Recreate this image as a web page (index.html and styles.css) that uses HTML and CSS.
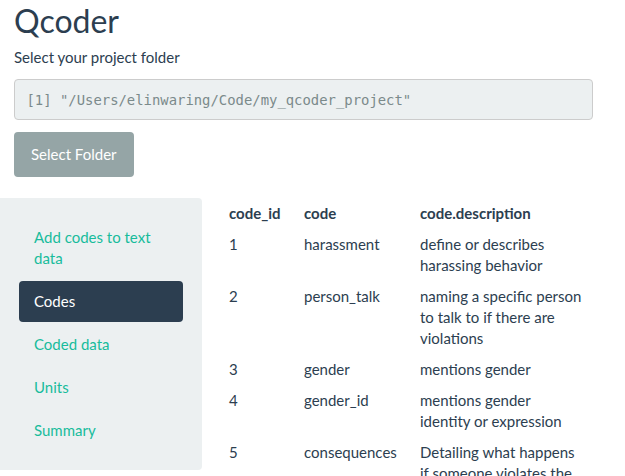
FILE: index.html
```html
<!DOCTYPE html>
<html>
<head>
<meta charset="utf-8">
<link rel="stylesheet" href="styles.css">
</head>
<body>
<div class="header">
  <h2 class="title">Qcoder</h2>
  <div class="label">Select your project folder</div>
  <pre class="path">[1] "/Users/elinwaring/Code/my_qcoder_project"</pre>
  <button class="btn">Select Folder</button>
</div>
<div class="layout">
  <div class="well">
    <ul class="pills">
      <li><a>Add codes to text data</a></li>
      <li class="active"><a>Codes</a></li>
      <li><a>Coded data</a></li>
      <li><a>Units</a></li>
      <li><a>Summary</a></li>
    </ul>
  </div>
  <div class="main">
    <table class="codes">
      <thead>
        <tr><th class="c1">code_id</th><th class="c2">code</th><th class="c3">code.description</th></tr>
      </thead>
      <tbody>
        <tr><td>1</td><td>harassment</td><td>define or describes harassing behavior</td></tr>
        <tr><td>2</td><td>person_talk</td><td>naming a specific person to talk to if there are violations</td></tr>
        <tr><td>3</td><td>gender</td><td>mentions gender</td></tr>
        <tr><td>4</td><td>gender_id</td><td>mentions gender identity or expression</td></tr>
        <tr><td>5</td><td>consequences</td><td>Detailing what happens if someone violates the code</td></tr>
      </tbody>
    </table>
  </div>
</div>
</body>
</html>
```

FILE: styles.css
```css
html, body {
  margin: 0;
  padding: 0;
  background: #ffffff;
  overflow: hidden;
}
body {
  font-family: Lato, "Open Sans", "Liberation Sans", sans-serif;
  font-size: 15px;
  line-height: 21px;
  color: #2c3e50;
  height: 476px;
}
.header {
  padding: 0 32px 0 14px;
}
.title {
  margin: 2px 0 0 0;
  font-size: 32px;
  line-height: 38px;
  font-weight: 400;
  color: #2c3e50;
}
.label {
  margin-top: 7px;
}
.path {
  margin: 11px 0 0 0;
  padding: 9.5px 11.5px;
  font-family: "DejaVu Sans Mono", "Liberation Mono", monospace;
  font-size: 13.9px;
  line-height: 20px;
  color: #7b8a8b;
  background: #ecf0f1;
  border: 1px solid #cccccc;
  border-radius: 4px;
}
.btn {
  display: block;
  margin-top: 12px;
  padding: 10px 15px;
  font-family: inherit;
  font-size: 15px;
  line-height: 21px;
  color: #ffffff;
  background: #95a5a6;
  border: 2px solid #95a5a6;
  border-radius: 4px;
}
.layout {
  display: flex;
  align-items: flex-start;
  margin-top: 21px;
}
.well {
  width: 202px;
  box-sizing: border-box;
  padding: 19px;
  background: #ecf0f1;
  border-radius: 0 4px 4px 0;
  flex: none;
}
.pills {
  list-style: none;
  margin: 0;
  padding: 0;
}
.pills li + li {
  margin-top: 2px;
}
.pills a {
  display: block;
  padding: 10px 15px;
  color: #18bc9c;
  border-radius: 4px;
}
.pills li.active a {
  background: #2c3e50;
  color: #ffffff;
}
.main {
  padding-left: 22px;
}
.codes {
  border-collapse: collapse;
}
.codes th, .codes td {
  padding: 5px;
  text-align: left;
  vertical-align: top;
}
.codes th {
  font-weight: 700;
}
.c1 { width: 65px; }
.c2 { width: 106px; }
.c3 { width: 162px; }
```
